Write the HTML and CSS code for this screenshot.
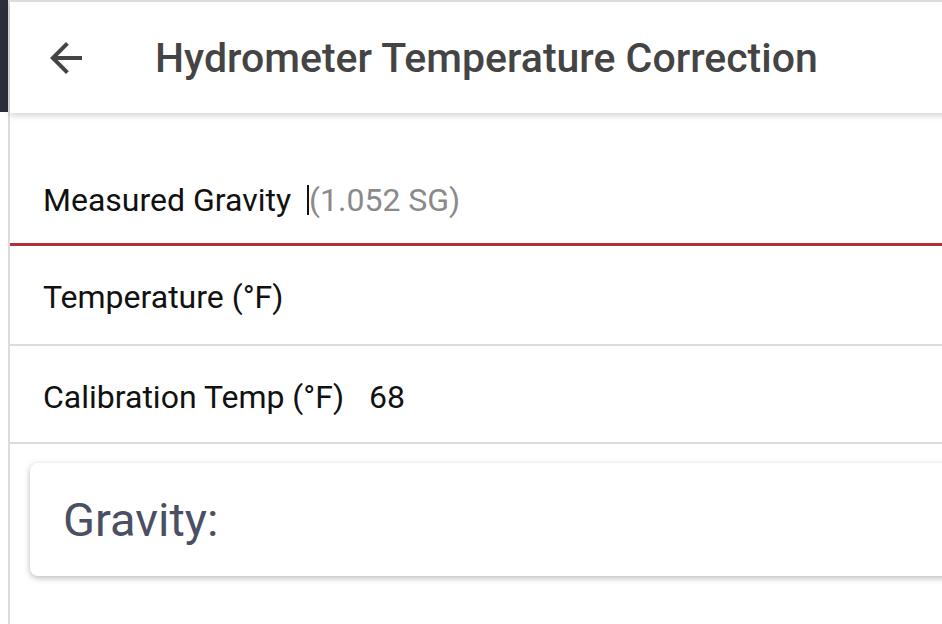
FILE: index.html
```html
<!DOCTYPE html>
<html>
<head>
  <meta charset="UTF-8">
  <title>Hydrometer Temperature Correction</title>
  <link rel="stylesheet" href="styles.css">
</head>
<body>
  <div class="app">
    <div class="rail">
      <div class="rail-top"></div>
    </div>
    <div class="main">
      <header class="toolbar">
        <button class="back" aria-label="Back">
          <svg width="48" height="48" viewBox="0 0 24 24">
            <path d="M20 11H7.83l5.59-5.59L12 4l-8 8 8 8 1.41-1.41L7.83 13H20v-2z" fill="#444"/>
          </svg>
        </button>
        <h1 class="title">Hydrometer Temperature Correction</h1>
      </header>

      <div class="fields">
        <label class="field field-active">
          <span class="label">Measured Gravity</span>
          <span class="caret"></span>
          <span class="placeholder">(1.052 SG)</span>
        </label>
        <label class="field">
          <span class="label">Temperature (°F)</span>
        </label>
        <label class="field field-last">
          <span class="label">Calibration Temp (°F)</span>
          <span class="value">68</span>
        </label>
      </div>

      <div class="result">
        <h2 class="result-title">Gravity:</h2>
      </div>
    </div>
  </div>
</body>
</html>
```

FILE: styles.css
```css
html, body {
  margin: 0;
  height: 100%;
  overflow: hidden;
  background: #fff;
}

body {
  font-family: Roboto, "Noto Sans", Arial, sans-serif;
}

.app {
  display: flex;
  height: 100%;
}

.rail {
  width: 8px;
  flex: none;
}

.rail-top {
  height: 112px;
  background: #2b2f3b;
}

.main {
  flex: none;
  width: 1000px;
  border-left: 2px solid #dcdcdc;
}

.toolbar {
  display: flex;
  align-items: center;
  height: 111px;
  border-top: 2px solid #dcdcdc;
  background: #fff;
  box-shadow: 0 3px 6px rgba(0, 0, 0, 0.16);
  position: relative;
}

.back {
  margin-left: 32px;
  padding: 0;
  border: none;
  background: none;
  width: 48px;
  height: 48px;
}

.back svg {
  display: block;
}

.title {
  margin: 0 0 0 65px;
  font-size: 41px;
  font-weight: 500;
  color: #444;
}

.fields {
  margin-top: 36px;
}

.field {
  display: flex;
  align-items: center;
  padding: 33px 0 29px 33px;
  font-size: 32px;
  line-height: 36px;
  color: #111;
  border-bottom: 2px solid #dcdcdc;
}

.field-active {
  padding-bottom: 25px;
  border-bottom: 3px solid #b03236;
}

.field-last {
  padding-bottom: 27px;
}

.caret {
  width: 2px;
  height: 30px;
  margin-left: 16px;
  background: #111;
}

.placeholder {
  color: #8a8a8a;
}

.value {
  margin-left: 25px;
}

.result {
  margin: 19px 0 0 20px;
  height: 113px;
  display: flex;
  align-items: center;
  padding-left: 33px;
  background: #fff;
  border-radius: 8px;
  box-shadow: 0 2px 6px rgba(0, 0, 0, 0.28);
}

.result-title {
  margin: 0;
  font-size: 47px;
  font-weight: 400;
  color: #4a5064;
}
```
